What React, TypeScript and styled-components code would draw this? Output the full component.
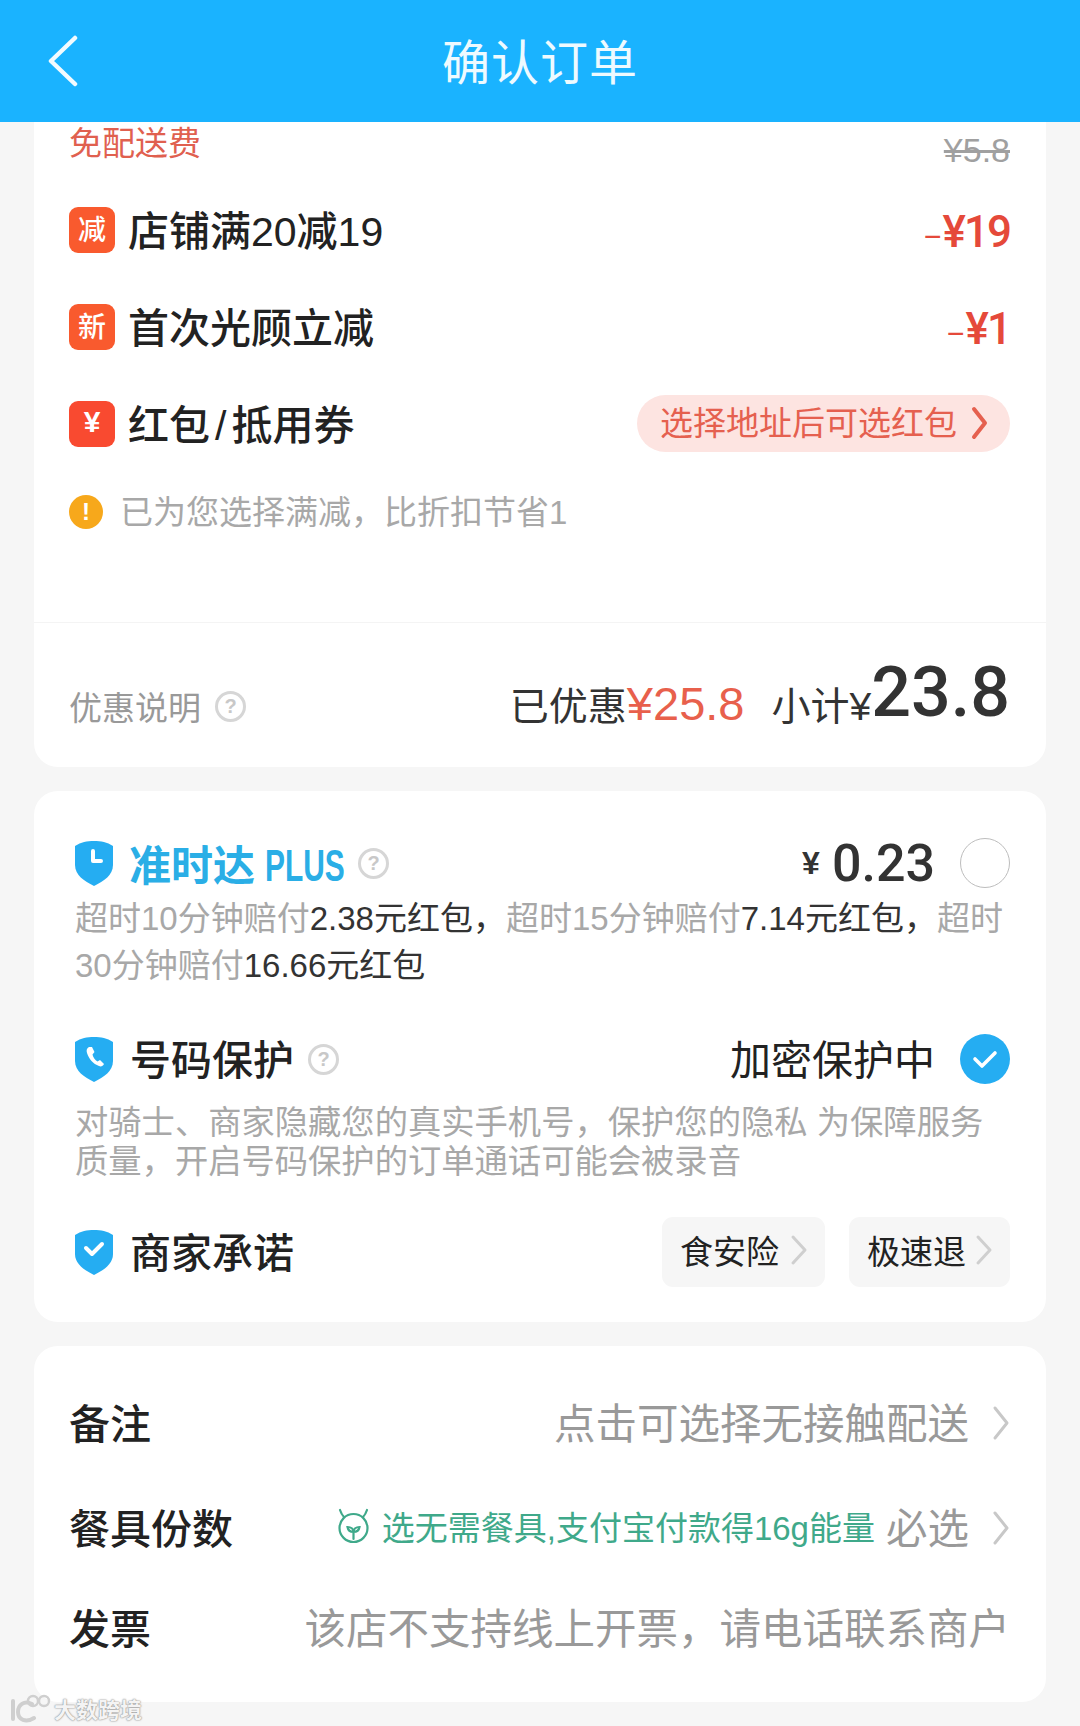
import React from "react";
import styled, { createGlobalStyle } from "styled-components";

const GlobalStyle = createGlobalStyle`
  html, body {
    margin: 0;
    padding: 0;
    background: #f6f6f6;
    font-family: "Liberation Sans", "Noto Sans CJK SC", sans-serif;
  }
`;

const Page = styled.div`
  position: relative;
  width: 1080px;
  height: 1726px;
  overflow: hidden;
  background: #f6f6f6;
  color: #222;
`;

const Header = styled.header`
  display: grid;
  grid-template-columns: 1fr auto 1fr;
  align-items: center;
  height: 122px;
  padding-left: 48px;
  padding-right: 48px;
  background: #1ab3ff;
  box-sizing: border-box;
`;

const HeaderTitle = styled.h1`
  margin: 0;
  padding-bottom: 4px;
  font-size: 48px;
  font-weight: 400;
  letter-spacing: 1px;
  color: #eefaff;
`;

const Card = styled.section<{ $flatTop?: boolean }>`
  margin: ${(p) => (p.$flatTop ? "0" : "24px")} 34px 0;
  background: #fff;
  border-radius: ${(p) => (p.$flatTop ? "0 0 24px 24px" : "24px")};
`;

const PromoArea = styled.div`
  padding: 0 36px 70px 35px;
`;

const FeeRow = styled.div`
  display: flex;
  justify-content: space-between;
  align-items: flex-start;
  height: 60px;
`;

const FeeLabel = styled.span`
  margin-top: 1px;
  font-size: 33px;
  line-height: 42px;
  color: #e0604f;
`;

const OldPrice = styled.span`
  margin-top: 7px;
  font-size: 34px;
  line-height: 42px;
  color: #a0a0a0;
  text-decoration: line-through;
`;

const PromoRow = styled.div`
  display: flex;
  align-items: center;
  height: 96px;
  margin-bottom: 1px;
`;

const Badge = styled.span<{ $bg: string; $size?: number; $weight?: number }>`
  display: flex;
  align-items: center;
  justify-content: center;
  flex: none;
  box-sizing: border-box;
  width: 46px;
  height: 46px;
  margin-right: 13px;
  padding-bottom: 4px;
  border-radius: 9px;
  background: ${(p) => p.$bg};
  color: #fff;
  font-size: ${(p) => p.$size ?? 28}px;
  font-weight: ${(p) => p.$weight ?? 500};
`;

const PromoName = styled.span`
  flex: 1;
  padding-bottom: 5px;
  font-size: 41px;
  font-weight: 500;
  color: #222;
`;

const Slash = styled.span`
  margin: 0 5px;
`;

const Discount = styled.span`
  margin-top: 4px;
  font-family: Roboto, "Liberation Sans", sans-serif;
  font-size: 44px;
  font-weight: 500;
  letter-spacing: -2px;
  color: #e5493a;
`;

const DiscountSign = styled.span`
  margin-right: 2px;
  font-size: 30px;
  font-weight: 400;
`;

const Pill = styled.div`
  display: flex;
  align-items: center;
  justify-content: space-between;
  box-sizing: border-box;
  width: 373px;
  height: 57px;
  margin-top: -2px;
  padding: 0 21px 0 23px;
  border-radius: 29px;
  background: #fde4e1;
  color: #e5604f;
  font-size: 33px;
`;

const PillText = styled.span`
  padding-bottom: 5px;
`;

const TipRow = styled.div`
  display: flex;
  align-items: center;
  height: 80px;
  margin-top: -1px;
`;

const TipIcon = styled.span`
  display: flex;
  align-items: center;
  justify-content: center;
  width: 34px;
  height: 34px;
  margin-right: 17px;
  border-radius: 50%;
  background: #f7a81b;
  color: #fff;
  font-size: 24px;
  font-weight: 700;
`;

const MutedText = styled.span`
  padding-bottom: 4px;
  font-size: 33px;
  color: #a8a8a8;
`;

const Summary = styled.div`
  display: flex;
  justify-content: space-between;
  align-items: baseline;
  box-sizing: border-box;
  height: 145px;
  padding: 32px 36px 0 35px;
  border-top: 1px solid #f4f4f4;
`;

const SummaryHint = styled.span`
  display: flex;
  align-items: center;
  gap: 14px;
  font-size: 33px;
  color: #999;
`;

const Totals = styled.span`
  display: flex;
  align-items: baseline;
  color: #333;
  font-size: 39px;
`;

const Saved = styled.span`
  margin-right: 27px;
  font-size: 47px;
  color: #e8604c;
`;

const Total = styled.span`
  font-family: Roboto, "Liberation Sans", sans-serif;
  font-size: 70px;
  font-weight: 500;
  color: #333;
  transform: translateY(-4px);
`;

const Help = styled.span`
  display: inline-flex;
  align-items: center;
  justify-content: center;
  box-sizing: border-box;
  width: 31px;
  height: 31px;
  border: 3px solid #d6d6d6;
  border-radius: 50%;
  color: #c8c8c8;
  font-size: 20px;
  font-weight: 700;
`;

const ServiceBody = styled.div`
  padding: 40px 36px 35px 40px;
`;

const ServiceRow = styled.div<{ $top?: number; $height?: number }>`
  display: flex;
  align-items: center;
  height: ${(p) => p.$height ?? 64}px;
  margin-top: ${(p) => p.$top ?? 0}px;
`;

const ServiceName = styled.span`
  margin-left: 16px;
  padding-bottom: 4px;
  font-size: 41px;
  font-weight: 500;
  color: #222;
`;

const PlusName = styled.span`
  display: flex;
  align-items: baseline;
  margin-left: 15px;
  padding-bottom: 2px;
  font-size: 42px;
  font-weight: 700;
  color: #2aaee6;
`;

const PlusMark = styled.span`
  display: inline-block;
  width: 79px;
  margin-left: 10px;
  font-size: 44px;
  font-weight: 700;
  transform: scaleX(0.68);
  transform-origin: left center;
  white-space: nowrap;
`;

const ServiceHelp = styled.span`
  display: flex;
  margin-left: 14px;
`;

const ServiceRight = styled.div`
  display: flex;
  align-items: center;
  margin-left: auto;
`;

const Yen = styled.span`
  margin-right: 12px;
  font-size: 32px;
  font-weight: 700;
  color: #333;
`;

const Fee = styled.span`
  font-family: Roboto, "Liberation Sans", sans-serif;
  font-size: 52px;
  font-weight: 500;
  color: #333;
`;

const Radio = styled.span<{ $checked?: boolean }>`
  display: flex;
  align-items: center;
  justify-content: center;
  box-sizing: border-box;
  width: 50px;
  height: 50px;
  margin-left: 25px;
  border-radius: 50%;
  border: ${(p) => (p.$checked ? "none" : "1.5px solid #bdbdbd")};
  background: ${(p) => (p.$checked ? "#25adf2" : "#fff")};
`;

const StateText = styled.span`
  padding-bottom: 4px;
  font-size: 41px;
  color: #222;
`;

const Description = styled.p<{ $line: number; $top?: number; $size?: number }>`
  margin: ${(p) => p.$top ?? 0}px 0 0 1px;
  font-size: ${(p) => p.$size ?? 33}px;
  line-height: ${(p) => p.$line}px;
  color: #a8a8a8;
  strong {
    font-weight: 400;
    color: #333;
  }
`;

const PromiseButton = styled.span<{ $width: number }>`
  display: flex;
  align-items: center;
  justify-content: space-between;
  box-sizing: border-box;
  width: ${(p) => p.$width}px;
  height: 70px;
  padding: 0 17px 4px 18px;
  border-radius: 11px;
  background: #f6f6f6;
  font-size: 33px;
  color: #222;
`;

const PromiseList = styled.div`
  display: flex;
  gap: 24px;
  margin-left: auto;
`;

const Settings = styled.div`
  padding: 24px 36px 27px 35px;
`;

const SettingRow = styled.div<{ $height: number }>`
  display: flex;
  align-items: center;
  height: ${(p) => p.$height}px;
`;

const SettingName = styled.span`
  padding-bottom: 4px;
  font-size: 41px;
  font-weight: 500;
  color: #222;
`;

const SettingValue = styled.div`
  display: flex;
  align-items: center;
  margin-left: auto;
  padding-bottom: 4px;
  font-size: 41.5px;
  color: #999;
`;

const EnergyNote = styled.span`
  display: flex;
  align-items: center;
  gap: 12px;
  margin-right: 11px;
  font-size: 33px;
  color: #3fa98a;
`;

const RowArrow = styled.span`
  display: flex;
  margin-top: 4px;
  margin-left: 23px;
`;

const Watermark = styled.div`
  position: absolute;
  left: 10px;
  top: 1692px;
  display: flex;
  align-items: center;
  gap: 2px;
  color: #f4f4f4;
  font-size: 22px;
  font-weight: 700;
  text-shadow: 0 0 2px #8c8c8c, 0 0 1px #8c8c8c;
`;

const Chevron = ({ w, h, color, stroke }: { w: number; h: number; color: string; stroke: number }) => (
  <svg width={w} height={h} viewBox={`0 0 ${w} ${h}`} fill="none">
    <path
      d={`M${stroke} ${stroke} L${w - stroke} ${h / 2} L${stroke} ${h - stroke}`}
      stroke={color}
      strokeWidth={stroke}
      strokeLinecap="round"
      strokeLinejoin="round"
    />
  </svg>
);

const BackIcon = () => (
  <svg width="30" height="52" viewBox="0 0 30 52" fill="none">
    <path d="M27 3 L3 26 L27 49" stroke="#f2fbff" strokeWidth="4.5" strokeLinecap="round" strokeLinejoin="round" />
  </svg>
);

const Shield = ({ children }: { children: React.ReactNode }) => (
  <svg width="40" height="46" viewBox="0 0 40 46" style={{ flex: "none" }}>
    <path
      d="M1 6 C7 2 13 1 20 1 C27 1 33 2 39 6 L39 25 C39 35 30 41 20 46 C10 41 1 35 1 25 Z"
      fill="#25adf2"
    />
    {children}
  </svg>
);

const ClockMark = () => (
  <path d="M19 11 L19 21 L27 21" fill="none" stroke="#fff" strokeWidth="4" strokeLinecap="round" strokeLinejoin="round" />
);

const PhoneMark = () => (
  <path
    d="M15 11 C13 12 12 14 13 17 C15 23 19 28 25 30 C27 31 29 30 30 28 L26 24 L23.5 25.5 C21 24 19 21 18.5 18.5 L20.5 16 L18 11 Z"
    fill="#fff"
  />
);

const CheckMark = () => (
  <path d="M12 19 L18 25 L28 15" fill="none" stroke="#fff" strokeWidth="4" strokeLinecap="round" strokeLinejoin="round" />
);

const SproutIcon = () => (
  <svg width="33" height="36" viewBox="0 0 33 36" fill="none" stroke="#3fa98a" strokeWidth="2.2" strokeLinecap="round">
    <circle cx="16.5" cy="20" r="14" />
    <path d="M7 9 C5 7 4 5 3 2 M26 9 C28 7 29 5 30 2" />
    <path d="M16.5 31 L16.5 24 M16.5 24 C13 24 11 22 10.5 19 C14 19 16.5 21 16.5 24 M16.5 24 C20 24 22 22 22.5 19 C19 19 16.5 21 16.5 24" />
  </svg>
);

const WatermarkLogo = () => (
  <svg width="42" height="30" viewBox="0 0 42 30" fill="none" stroke="#cfcfcf" strokeLinecap="round">
    <path d="M3 8 L3 26" strokeWidth="4" />
    <path d="M22 11 C14 7 8 12 8 19 C8 27 16 30 24 25" strokeWidth="4" />
    <circle cx="23" cy="8" r="5" strokeWidth="2.4" />
    <circle cx="34" cy="8" r="5" strokeWidth="2.4" />
  </svg>
);

const App = () => (
  <Page lang="zh-CN">
    <GlobalStyle />
    <Header>
      <BackIcon />
      <HeaderTitle>确认订单</HeaderTitle>
    </Header>

    <Card $flatTop>
      <PromoArea>
        <FeeRow>
          <FeeLabel>免配送费</FeeLabel>
          <OldPrice>¥5.8</OldPrice>
        </FeeRow>
        <PromoRow>
          <Badge $bg="#f95a2e">减</Badge>
          <PromoName>店铺满20减19</PromoName>
          <Discount>
            <DiscountSign>–</DiscountSign>¥19
          </Discount>
        </PromoRow>
        <PromoRow>
          <Badge $bg="#f95a2e">新</Badge>
          <PromoName>首次光顾立减</PromoName>
          <Discount>
            <DiscountSign>–</DiscountSign>¥1
          </Discount>
        </PromoRow>
        <PromoRow>
          <Badge $bg="#f94a30" $size={30} $weight={700}>¥</Badge>
          <PromoName>
            红包<Slash>/</Slash>抵用券
          </PromoName>
          <Pill>
            <PillText>选择地址后可选红包</PillText>
            <Chevron w={19} h={36} color="#e5604f" stroke={4} />
          </Pill>
        </PromoRow>
        <TipRow>
          <TipIcon>!</TipIcon>
          <MutedText>已为您选择满减，比折扣节省1</MutedText>
        </TipRow>
      </PromoArea>
      <Summary>
        <SummaryHint>
          优惠说明
          <Help>?</Help>
        </SummaryHint>
        <Totals>
          已优惠<Saved>¥25.8</Saved>
          小计¥<Total>23.8</Total>
        </Totals>
      </Summary>
    </Card>

    <Card>
      <ServiceBody>
        <ServiceRow>
          <Shield>
            <ClockMark />
          </Shield>
          <PlusName>
            准时达<PlusMark>PLUS</PlusMark>
          </PlusName>
          <ServiceHelp>
            <Help>?</Help>
          </ServiceHelp>
          <ServiceRight>
            <Yen>¥</Yen>
            <Fee>0.23</Fee>
            <Radio />
          </ServiceRight>
        </ServiceRow>
        <Description $line={47}>
          超时10分钟赔付<strong>2.38元红包，</strong>超时15分钟赔付<strong>7.14元红包，</strong>超时30分钟赔付
          <strong>16.66元红包</strong>
        </Description>

        <ServiceRow $top={38}>
          <Shield>
            <PhoneMark />
          </Shield>
          <ServiceName>号码保护</ServiceName>
          <ServiceHelp>
            <Help>?</Help>
          </ServiceHelp>
          <ServiceRight>
            <StateText>加密保护中</StateText>
            <Radio $checked>
              <svg width="26" height="20" viewBox="0 0 26 20" fill="none">
                <path d="M3 10 L10 17 L23 4" stroke="#fff" strokeWidth="3.6" strokeLinecap="round" strokeLinejoin="round" />
              </svg>
            </Radio>
          </ServiceRight>
        </ServiceRow>
        <Description $line={39} $top={12} $size={33.3}>
          对骑士、商家隐藏您的真实手机号，保护您的隐私 为保障服务
          <br />
          质量，开启号码保护的订单通话可能会被录音
        </Description>

        <ServiceRow $top={36} $height={70}>
          <Shield>
            <CheckMark />
          </Shield>
          <ServiceName>商家承诺</ServiceName>
          <PromiseList>
            <PromiseButton $width={163}>
              食安险
              <Chevron w={18} h={32} color="#cfcfcf" stroke={3} />
            </PromiseButton>
            <PromiseButton $width={161}>
              极速退
              <Chevron w={18} h={32} color="#cfcfcf" stroke={3} />
            </PromiseButton>
          </PromiseList>
        </ServiceRow>
      </ServiceBody>
    </Card>

    <Card>
      <Settings>
        <SettingRow $height={105}>
          <SettingName>备注</SettingName>
          <SettingValue>
            点击可选择无接触配送
            <RowArrow>
              <Chevron w={18} h={36} color="#c8c8c8" stroke={3} />
            </RowArrow>
          </SettingValue>
        </SettingRow>
        <SettingRow $height={105}>
          <SettingName>餐具份数</SettingName>
          <SettingValue>
            <EnergyNote>
              <SproutIcon />
              选无需餐具,支付宝付款得16g能量
            </EnergyNote>
            必选
            <RowArrow>
              <Chevron w={18} h={36} color="#c8c8c8" stroke={3} />
            </RowArrow>
          </SettingValue>
        </SettingRow>
        <SettingRow $height={95}>
          <SettingName>发票</SettingName>
          <SettingValue>该店不支持线上开票，请电话联系商户</SettingValue>
        </SettingRow>
      </Settings>
    </Card>

    <Watermark>
      <WatermarkLogo />
      大数跨境
    </Watermark>
  </Page>
);

export default App;
